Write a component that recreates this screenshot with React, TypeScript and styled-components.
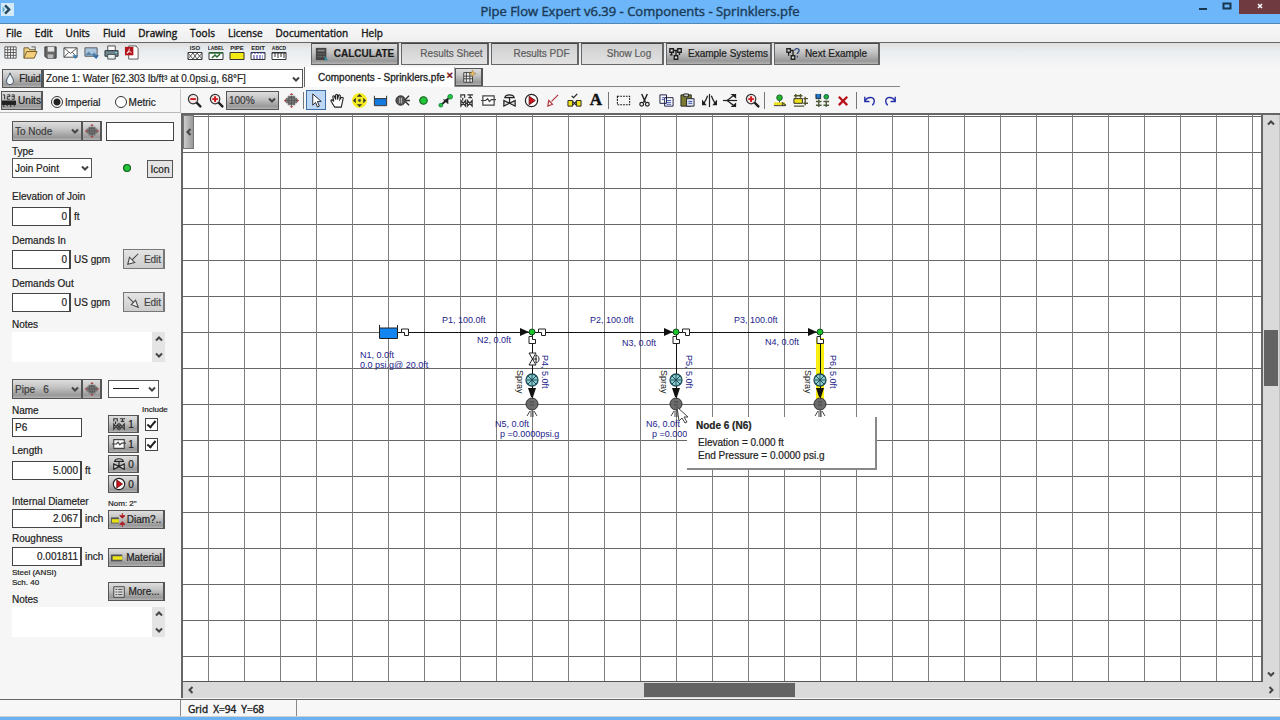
import React from 'react';
import styled, { createGlobalStyle, css } from 'styled-components';

const uiFont = '"Liberation Sans", Arial, sans-serif';
const frameFont = '"Open Sans", "Noto Sans", sans-serif';
const steel = 'linear-gradient(#dedede, #c4c4c4 40%, #989898 85%, #b4b4b4)';

const GlobalStyle = createGlobalStyle`
  *, *::before, *::after { box-sizing: border-box; }
  body { margin: 0; background: #f6f6f6; color: #222; font: 10px/13px ${uiFont}; -webkit-text-stroke: 0.2px; }
  button, input, select, textarea { font: inherit; color: inherit; margin: 0; padding: 0; border-radius: 0; }
  svg { display: block; flex: none; }
`;

const Window = styled.div`
  display: flex;
  flex-direction: column;
  height: 100vh;
  overflow: hidden;
  border-bottom: 3px solid #6cb2f2;
`;

/* ---------- window frame ---------- */

const TitleBar = styled.header`
  position: relative;
  display: flex;
  justify-content: center;
  height: 24px;
  flex: none;
  background: #6cb6f9;
  border-bottom: 1px solid #5288b6;
`;

const Title = styled.h1`
  margin: 0;
  font: 13px/22px ${frameFont};
  color: #1b3a57;
  -webkit-text-stroke: 0.4px #1b3a57;
`;

const AppIcon = styled.div`
  position: absolute;
  left: 1px;
  top: 3px;
`;

const WindowButtons = styled.div`
  position: absolute;
  right: 0;
  top: 0;
  display: flex;
`;

const WindowButton = styled.button<{ $close?: boolean }>`
  display: flex;
  align-items: center;
  justify-content: center;
  width: ${(p) => (p.$close ? 41 : 24)}px;
  height: 14px;
  padding-bottom: 3px;
  border: 0;
  background: ${(p) => (p.$close ? '#6f3b40' : 'transparent')};
  color: ${(p) => (p.$close ? '#fff' : '#16374f')};
`;

const MenuBar = styled.nav`
  display: flex;
  align-items: center;
  gap: 13px;
  height: 19px;
  flex: none;
  padding-left: 6px;
  background: linear-gradient(#f8f8f8, #efefef);
  border-bottom: 1px solid #666;
`;

const MenuLink = styled.a`
  font: 10px/16px ${frameFont};
  color: #1a1a1a;
  text-decoration: none;
  -webkit-text-stroke: 0.4px #1a1a1a;
`;

/* ---------- top toolbar ---------- */

const TopToolbar = styled.div`
  display: flex;
  align-items: flex-start;
  height: 24px;
  flex: none;
  padding-left: 2px;
  background: linear-gradient(#e0dfe0, #e9edf0 35%, #f6f6f6);
`;

const IconStrip = styled.div<{ $width: number; $left?: number }>`
  display: flex;
  justify-content: space-between;
  align-items: center;
  flex: none;
  width: ${(p) => p.$width}px;
  margin-left: ${(p) => p.$left || 0}px;
`;

const FlatButton = styled.button<{ $size?: number; $active?: boolean }>`
  display: flex;
  align-items: center;
  justify-content: center;
  flex: none;
  width: ${(p) => p.$size || 16}px;
  height: ${(p) => p.$size || 18}px;
  border: ${(p) => (p.$active ? '1px solid #3c6ea8' : '0')};
  background: ${(p) => (p.$active ? '#bcd8f6' : 'transparent')};
`;

const LetterButton = styled(FlatButton)`
  font: bold 17px/20px "Liberation Serif", serif;
  color: #111;
  -webkit-text-stroke: 0.5px #111;
`;

const ActionGroup = styled.div`
  display: flex;
  gap: 2px;
  margin-left: 24px;
`;

const ActionButton = styled.button<{ $width: number; $tone: 'light' | 'steel'; $strong?: boolean }>`
  display: flex;
  align-items: center;
  justify-content: center;
  gap: 5px;
  width: ${(p) => p.$width}px;
  height: 22px;
  padding-left: ${(p) => (p.$tone === 'light' ? 14 : 0)}px;
  border: 1px solid #666;
  border-top-color: #444;
  border-right: 2px solid #666;
  font: ${(p) => (p.$strong ? 'bold ' : '')}10px/16px ${uiFont};
  white-space: nowrap;
  color: ${(p) => (p.$tone === 'light' ? '#5c5c5c' : '#1c1c1c')};
  background: ${(p) => (p.$tone === 'light' ? 'linear-gradient(#cfcfcf, #e2e2e2)' : steel)};
`;

/* ---------- fluid row, tabs ---------- */

const DocumentRow = styled.div`
  display: flex;
  height: 22px;
  flex: none;
`;

const FluidGroup = styled.div`
  display: flex;
  width: 304px;
  flex: none;
  padding: 2px 1px 1px 2px;
`;

const SteelButton = styled.button<{ $width: number; $height?: number }>`
  display: flex;
  align-items: center;
  justify-content: center;
  gap: 2px;
  flex: none;
  width: ${(p) => p.$width}px;
  height: ${(p) => p.$height || 19}px;
  border: 1px solid #555;
  border-right-width: 2px;
  background: ${steel};
  white-space: nowrap;
`;

const SelectBox = styled.span<{ $width?: number; $height: number; $steel?: boolean }>`
  position: relative;
  display: flex;
  flex: ${(p) => (p.$width ? 'none' : '1')};
  width: ${(p) => (p.$width ? `${p.$width}px` : 'auto')};
  height: ${(p) => p.$height}px;

  select {
    appearance: none;
    width: 100%;
    padding-left: 2px;
    border: 1px solid #555;
    background: ${(p) => (p.$steel ? steel : '#fff')};
    ${(p) => p.$steel && css`color: #3a3a3a;`}
  }

  svg {
    position: absolute;
    top: 50%;
    right: 3px;
    transform: translateY(-50%);
    pointer-events: none;
  }

  svg + svg {
    right: auto;
    left: 5px;
  }
`;

const TabStrip = styled.div`
  display: flex;
  align-items: flex-end;
  flex: none;
  height: 20px;
  width: 596px;
  border-bottom: 1px solid #888;
`;

const Tab = styled.div`
  display: flex;
  align-items: center;
  gap: 1px;
  width: 151px;
  height: 20px;
  margin-bottom: -1px;
  padding-left: 13px;
  background: #fff;
  border-left: 1px solid #666;
  border-right: 1px solid #aaa;
  -webkit-text-stroke: 0.3px #222;
  white-space: nowrap;
`;

const TabClose = styled.button`
  width: 8px;
  height: 16px;
  border: 0;
  background: transparent;
  color: #7c1420;
  -webkit-text-stroke: 0.3px #7c1420;
  font: bold 11px/10px ${uiFont};
  padding-bottom: 5px;
`;

/* ---------- units row, drawing tools ---------- */

const ToolsRow = styled.div`
  display: flex;
  height: 24px;
  flex: none;
`;

const UnitsGroup = styled.fieldset`
  display: flex;
  align-items: center;
  width: 181px;
  flex: none;
  margin: 0;
  padding: 0 0 0 1px;
  border: 0;
  border-bottom: 1px solid #b8b8b8;
  border-right: 1px solid #c4c4c4;
`;

const RadioLabel = styled.label<{ $left: number }>`
  display: flex;
  align-items: center;
  gap: 2px;
  margin-left: ${(p) => p.$left}px;
  padding-top: 3px;

  input {
    appearance: none;
    width: 12px;
    height: 12px;
    border: 1px solid #333;
    border-radius: 50%;
    background: #fff;
  }
  input:checked {
    background: radial-gradient(circle, #222 3px, #fff 4px);
  }
`;

const DrawTools = styled.div`
  display: flex;
  align-items: center;
  padding: 0 0 2px 3px;
`;

const Separator = styled.span<{ $left?: number }>`
  width: 1px;
  height: 17px;
  margin: 0 4px 0 ${(p) => p.$left || 2}px;
  background: #777;
`;

/* ---------- main area ---------- */

const Main = styled.main`
  display: flex;
  flex: 1;
  min-height: 0;
`;

const Sidebar = styled.aside`
  width: 181px;
  flex: none;
  padding: 8px 7px 0 12px;
  background: #f6f6f6;
`;

const Row = styled.div<{ $gap?: number; $top?: number }>`
  display: flex;
  align-items: center;
  gap: ${(p) => p.$gap || 0}px;
  margin-top: ${(p) => p.$top || 0}px;
`;

const Label = styled.label<{ $top: number }>`
  display: block;
  margin-top: ${(p) => p.$top}px;
  line-height: 13px;
  white-space: nowrap;
`;

const TextInput = styled.input<{ $width: number; $right?: boolean }>`
  width: ${(p) => p.$width}px;
  height: 19px;
  padding: 0 2px;
  border: 1px solid #444;
  border-right-width: ${(p) => (p.$right ? 2 : 1)}px;
  background: #fff;
  text-align: ${(p) => (p.$right ? 'right' : 'left')};
`;

const NodeIcon = styled.div`
  margin: 0 13px 0 28px;
`;

const EditButton = styled.button`
  display: flex;
  align-items: center;
  justify-content: center;
  gap: 4px;
  width: 42px;
  height: 20px;
  margin-left: auto;
  margin-right: 9px;
  border: 1px solid #777;
  border-right-width: 2px;
  background: linear-gradient(#e4e4e4, #cdcdcd);
  color: #444;
`;

const IconButton = styled.button`
  width: 26px;
  height: 18px;
  margin-top: 2px;
  border: 1px solid #555;
  background: #e4e4e4;
`;

const NotesBox = styled.div`
  display: flex;
  width: 153px;
  height: 30px;
  margin-top: 1px;

  textarea {
    flex: 1;
    min-width: 0;
    border: 0;
    background: #fff;
    resize: none;
    overflow: hidden;
  }
`;

const Stepper = styled.div`
  display: flex;
  flex-direction: column;
  justify-content: space-between;
  width: 13px;
  padding: 3px 0;
  background: #e4e4e4;

  button {
    display: flex;
    justify-content: center;
    border: 0;
    background: transparent;
  }
`;

const PipeColumns = styled.div`
  display: flex;
  margin-top: 5px;
`;

const PipeFields = styled.div`
  width: 96px;
`;

const PipeActions = styled.div`
  display: flex;
  flex-direction: column;
`;

const SmallText = styled.div<{ $top?: number }>`
  margin-top: ${(p) => p.$top || 0}px;
  font: 8px/10px ${uiFont};
`;

const IncludeText = styled.div`
  margin: 1px 0 0 34px;
  font: 8px/10px ${uiFont};
`;

const ComponentRow = styled.div`
  display: flex;
  align-items: center;
  gap: 6px;
  height: 18px;
  margin-bottom: 2px;
`;

const CheckBox = styled.input`
  position: relative;
  appearance: none;
  width: 13px;
  height: 13px;
  border: 1px solid #444;
  background: #fff;

  &:checked::after {
    content: '';
    position: absolute;
    left: 3px;
    top: 0;
    width: 5px;
    height: 9px;
    border: solid #222;
    border-width: 0 2px 2px 0;
    transform: rotate(40deg);
  }
`;

/* ---------- canvas ---------- */

const Workspace = styled.section`
  display: flex;
  flex-direction: column;
  flex: 1;
  min-width: 0;
  border-left: 2px solid #666;
  border-top: 2px solid #666;
`;

const CanvasRow = styled.div`
  display: flex;
  flex: 1;
  min-height: 0;
`;

const Canvas = styled.div`
  position: relative;
  flex: 1;
  min-width: 0;
  overflow: hidden;
  border-right: 2px solid #666;
  border-bottom: 1px solid #555;
  background-color: #fff;
  background-image: linear-gradient(90deg, #7c7c7c 1px, transparent 1px), linear-gradient(#666 1px, transparent 1px);
  background-size: 36px 36px;
  background-position: 25px 1px;
`;

const CollapseHandle = styled.button`
  position: absolute;
  left: 0;
  top: 0;
  display: flex;
  align-items: center;
  justify-content: center;
  width: 11px;
  height: 34px;
  border: 1px solid #777;
  background: linear-gradient(90deg, #ccc, #999);
`;

const Diagram = styled.svg`
  position: absolute;
  left: 0;
  top: 0;

  text {
    font: 9px ${uiFont};
    fill: #23238c;
    -webkit-text-stroke: 0.2px #23238c;
  }
`;

const SprayText = styled.text`
  && {
    fill: #222;
    -webkit-text-stroke: 0.2px #222;
  }
`;

const NodeTip = styled.div`
  position: absolute;
  left: 504px;
  top: 302px;
  width: 190px;
  height: 53px;
  padding: 2px 0 0 11px;
  background: #fff;
  border-right: 2px solid #888;
  border-bottom: 2px solid #888;

  strong { display: block; margin: 0 0 4px -2px; }
`;

const Pointer = styled.div`
  position: absolute;
  left: 493px;
  top: 291px;
`;

const ScrollBar = styled.div<{ $vertical?: boolean }>`
  display: flex;
  flex-direction: ${(p) => (p.$vertical ? 'column' : 'row')};
  flex: none;
  ${(p) => (p.$vertical ? 'width: 17px;' : 'height: 16px;')}
  background: #dadada;
  border-right: 1px solid #c0c0c0;
`;

const ScrollArrow = styled.button`
  display: flex;
  align-items: center;
  justify-content: center;
  width: 16px;
  height: 16px;
  border: 0;
  background: transparent;
`;

const ScrollTrack = styled.div<{ $vertical?: boolean }>`
  display: flex;
  flex-direction: ${(p) => (p.$vertical ? 'column' : 'row')};
  flex: 1;
  padding: ${(p) => (p.$vertical ? '0 1px' : '1px 0')};
`;

const ScrollGap = styled.div<{ $grow: number }>`
  flex: ${(p) => p.$grow} 0 0;
`;

const ScrollThumb = styled.div<{ $grow: number }>`
  flex: ${(p) => p.$grow} 0 0;
  background: #636363;
`;

const StatusBar = styled.footer`
  display: flex;
  height: 18px;
  flex: none;
  margin-top: 1px;
  border-top: 1px solid #666;
  border-bottom: 1px solid #d0d0d0;
  background: #f7f7f7;
`;

const StatusCell = styled.div<{ $width: number }>`
  width: ${(p) => p.$width}px;
  padding-left: 7px;
  border-right: 1px solid #888;
  font: 10px/18px ${frameFont};
  -webkit-text-stroke: 0.4px #222;
`;

/* ---------- icons ---------- */

const art: Record<string, React.ReactNode> = {
  grid: <path d="M2 2h12v12H2zM5 2v12M8 2v12M11 2v12M2 5h12M2 8h12M2 11h12" stroke="#555" fill="#fff" />,
  open: <><path d="M1 14V3h5l1 2h6v3" fill="#f0d080" stroke="#6b5a30" /><path d="M1 14l3-7h11l-3 7z" fill="#f5cf7a" stroke="#6b5a30" /><path d="M9 2h4v3" stroke="#555" fill="none" /></>,
  save: <><path d="M2 2h12v12H4l-2-2z" fill="#666" stroke="#333" /><path d="M5 2h7v5H5z" fill="#e6e6e6" /><path d="M5 10h6v4H5z" fill="#bbb" /></>,
  mail: <><path d="M1 3h14v10H1z" fill="#fff" stroke="#444" /><path d="M1 3l7 6 7-6M1 13l5-5M15 13l-5-5" stroke="#444" fill="none" /><path d="M10 11h6l-3 4z" fill="#3a7fb0" /></>,
  mailout: <><path d="M1 3h13v9H1z" fill="#a8c6e0" stroke="#555" /><path d="M1 11l4-4 3 3 3-2 3 3" fill="#5d86a8" /><path d="M9 11h7l-3 4z" fill="#2d6ca5" /></>,
  print: <><path d="M4 1h8v5H4z" fill="#fff" stroke="#444" /><path d="M1 6h14v6H1z" fill="#6d8790" stroke="#333" /><path d="M4 10h8v5H4z" fill="#e8f2f5" stroke="#444" /><path d="M12 8h2" stroke="#7fe0ff" /></>,
  pdf: <><path d="M5 1h8l2 3v11H5z" fill="#fff" stroke="#555" /><path d="M1 2h9v9H1z" fill="#b3141b" /><path d="M3 9c2-1 3-4 2.500-5M3 8c2-1 4-1 5 0" stroke="#fff" fill="none" /></>,
  calc: <><path d="M1 1h12v14H1z" fill="#444" /><path d="M3 3h8v2H3z" fill="#888" /><path d="M3 8h8M3 11h8" stroke="#777" strokeDasharray="2 1" /><path d="M11 10v5h4z" fill="#2c8fa3" /></>,
  network: <path d="M1 2h4v4H1zM10 2h4v4h-4zM6 10h4v4H6zM5 4h5M8 4v6M3 6v3M12 6v3M1 9h3" fill="#ddd" stroke="#1c1c1c" strokeWidth="1.500" />,
  networkq: <><path d="M1 2h4v4H1zM6 10h4v4H6zM5 4h4M8 4v6M3 6v4" fill="#ddd" stroke="#222" strokeWidth="1.500" /><path d="M10 4c0-3 5-3 5 0 0 2-2 2-2 4M13 10v2" stroke="#2e4b7c" strokeWidth="1.500" fill="none" /></>,
  drop: <path d="M8 1c1 4 4 6 4 9.500a4 4 0 0 1-8 0C4 7 7 5 8 1z" fill="#eef6fb" stroke="#345" />,
  ruler: <><path d="M1 1h2v5M6 1h3v2H6v3h3M11 1h3v5h-3M11 3h3" stroke="#222" fill="none" /><path d="M0 8h16v4H0zM2 12v3M6 12v2M10 12v3M14 12v2" fill="#222" stroke="#222" /></>,
  newtab: <><path d="M2 3h10v11H2zM2 7h10M2 10h10M5 3v11M9 3v11" fill="#eee" stroke="#333" /><path d="M12 0l1 3 3 1-3 1-1 3-1-3-3-1 3-1z" fill="#f0c060" stroke="#8a6420" strokeWidth=".5" /></>,
  zoomout: <><circle cx="6.500" cy="6.500" r="5" fill="#f6e8e8" stroke="#333" strokeWidth="1.300" /><path d="M10 10l5 5" stroke="#222" strokeWidth="2.500" /><path d="M3.500 6.500h6" stroke="#d01818" strokeWidth="2" /></>,
  zoomin: <><circle cx="6.500" cy="6.500" r="5" fill="#f6e8e8" stroke="#333" strokeWidth="1.300" /><path d="M10 10l5 5" stroke="#222" strokeWidth="2.500" /><path d="M3.500 6.500h6M6.500 3.500v6" stroke="#d01818" strokeWidth="2" /></>,
  target: <><path d="M4 3h8v10H4zM2 5h12v6H2z" fill="#777" /><path d="M5 5h6v6H5zM8 1v14M1 8h14" stroke="#444" strokeDasharray="1 1" fill="none" /><path d="M8 0l2 2H6zM8 16l2-2H6zM0 8l2-2v4zM16 8l-2-2v4z" fill="#a83838" /></>,
  cursor: <path d="M4 1v12l3-3 2 5 2-1-2-5h4z" fill="#fff" stroke="#222" />,
  hand: <path d="M5 15C3 12 1 9 1 8s1.500-1 3 1L3 4c0-1.500 1.500-1.500 2 0l1 3V2.500c0-1.500 2-1.500 2 0V7l1-4c.5-1.500 2-1 2 0l-.5 4 1.500-2c1-1 2.500 0 2 1L12 15z" fill="#fff" stroke="#222" strokeWidth="1.200" />,
  pan: <><circle cx="8" cy="8" r="8" fill="#f4ec20" /><path d="M8 1l3 3H5zM8 15l3-3H5zM1 8l3-3v6zM15 8l-3-3v6z" fill="#333" /><circle cx="8" cy="8" r="1.500" fill="#444" /></>,
  tank: <><path d="M2 6h12v7H2z" fill="#1479e0" /><path d="M1.500 3v10.500h13V3M2 6h12" stroke="#222" fill="none" /></>,
  spray: <><circle cx="6" cy="8" r="5" fill="#555" stroke="#222" /><path d="M5 5v6M7 5v6" stroke="#bbb" /><path d="M11 7l4-4M11 8h5M11 9l4 4" stroke="#333" strokeWidth="1.500" /></>,
  join: <circle cx="8" cy="8" r="4" fill="#22c43a" stroke="#145c1c" strokeWidth="1.200" />,
  pipe: <><path d="M3 13L13 4" stroke="#222" strokeWidth="2" /><circle cx="3" cy="13" r="2" fill="#2bc43d" stroke="#184" /><circle cx="13" cy="4" r="2.500" fill="#2bc43d" stroke="#184" /><path d="M5 7l6 5v-5z" fill="#222" /></>,
  fittings: <path d="M2 5V2h4v3M9 2h6M12 2v3M10 5h4M4 5v3M2 8l5 6V8l-5 6zM9 8l5 6V8l-5 6zM7 11h2" fill="none" stroke="#333" strokeWidth="1.300" />,
  component: <path d="M2 3h12v10H2zM0 8h5l2-2 2 3 2-2h5" fill="#fff" stroke="#444" strokeWidth="1.300" />,
  valve: <path d="M2 8v6l6-3 6 3V8l-6 3zM8 11V5M3 5c1-4 9-4 10 0z" fill="#ddd" stroke="#222" strokeWidth="1.300" />,
  pump: <><circle cx="8" cy="8" r="6.500" fill="#fff" stroke="#222" strokeWidth="1.300" /><path d="M5.500 3.500v9L12 8z" fill="#d0121c" stroke="#611" /></>,
  demand: <path d="M14 2L7 9M4 8l4 4-5 2z" fill="#fff" stroke="#b03a40" strokeWidth="1.300" />,
  control: <><path d="M1 8h5v6H1zM10 8h5v6h-5z" fill="#ede21c" stroke="#222" /><path d="M6 9l4 4M10 9l-4 4M5 3l2 2 4-4" stroke="#222" fill="none" strokeWidth="1.300" /></>,
  marquee: <path d="M1.500 3.500h13v9h-13z" fill="none" stroke="#222" strokeWidth="1.200" strokeDasharray="2 1" />,
  cut: <><path d="M5 1l4 9M11 1L7 10" stroke="#222" strokeWidth="1.500" /><circle cx="5" cy="12" r="2" fill="none" stroke="#222" strokeWidth="1.300" /><circle cx="11" cy="12" r="2" fill="none" stroke="#222" strokeWidth="1.300" /></>,
  copy: <><path d="M1 2h7v9H1zM6 5h9v9H6z" fill="#fff" stroke="#14143c" /><path d="M3 5h3M3 7h3M8 8h5M8 10h5M8 12h5" stroke="#3a50a8" /></>,
  paste: <><path d="M1 2h11v12H1z" fill="#7c7a30" stroke="#222" /><path d="M4 1h5v3H4z" fill="#ccc" stroke="#222" /><path d="M7 6h8v8H7z" fill="#dfe6f6" stroke="#223" /><path d="M9 9h4M9 11h4" stroke="#3450a0" /></>,
  fliph: <><path d="M8 1v14" stroke="#222" strokeWidth="1.300" /><path d="M6 3C5 6 4 8 2 11M10 3c1 3 2 5 4 8" stroke="#222" fill="none" strokeWidth="1.300" /><path d="M0 7v6h5zM16 7v6h-5z" fill="#222" /></>,
  flipv: <><path d="M0 8h15" stroke="#222" strokeWidth="1.300" /><path d="M4 8c2-1 4-3 7-5M4 8c2 1 4 3 7 5" stroke="#222" fill="none" strokeWidth="1.300" /><path d="M8 1h6v5zM8 15h6v-5z" fill="#222" /></>,
  label: <><circle cx="8" cy="5" r="3" fill="#20b52e" stroke="#1a5a20" /><path d="M2 10h12v3H2z" fill="#f0e21a" /><path d="M8 8v2M2 13.500h12M11 10l4 3h-4z" stroke="#333" /></>,
  pipes: <><path d="M1 6h9v5H1z" fill="#ede21c" stroke="#222" /><path d="M3 1v4M8 1v4M1 3h9M1 14h11M13 4v9M11 6h5M11 11h5" stroke="#55552c" strokeWidth="1.500" /></>,
  nodes: <><path d="M1 1v5h5V1" fill="#1d74c8" stroke="#222" /><circle cx="12" cy="4" r="2.500" fill="#22b535" stroke="#154" /><path d="M4 7v8M1 9h6M1 13h6M12 8v7M9 9h6M9 13h6" stroke="#4c5c3c" strokeWidth="1.500" /></>,
  remove: <path d="M3 4l9 9M12 4l-9 9" stroke="#b8141c" strokeWidth="2.500" />,
  undo: <path d="M3 4v5h5M3 9c3-6 11-5 10 0 0 2-1 3-2 4" stroke="#2430a8" strokeWidth="1.500" fill="none" />,
  redo: <path d="M13 4v5H8M13 9C10 3 2 4 3 9c0 2 1 3 2 4" stroke="#2430a8" strokeWidth="1.500" fill="none" />,
  arrowin: <path d="M14 2L7 9M4 6l6 6-8 2z" fill="#eee" stroke="#444" strokeWidth="1.200" />,
  arrowout: <path d="M2 2l7 7M6 11l5-5 3 8z" fill="#eee" stroke="#444" strokeWidth="1.200" />,
  diameter: <><path d="M0 5h9v7H0z" fill="#555" /><path d="M1 7h8v4H1z" fill="#e8e015" /><path d="M13 0v5M10 3l3 3 3-3zM13 16v-5M10 13l3-3 3 3z" fill="#b01c24" stroke="#b01c24" /></>,
  material: <><path d="M1 4h13v8H1z" fill="#555" /><path d="M3 6h11v4H3z" fill="#ede51a" /></>,
  more: <><path d="M2 2h12v12H2z" fill="#ddd" stroke="#333" /><path d="M4 5h2M4 8h2M4 11h2M7 5h5M7 8h5M7 11h5" stroke="#333" /></>,
  logo: <><path d="M0 0h16v16H0z" fill="#d5eaf7" /><path d="M5 3l5 5-5 5" stroke="#25485f" strokeWidth="3" fill="none" /><path d="M2 4l3 4-3 4" fill="#56a8cf" /></>,
};

const Icon = ({ name, size = 16 }: { name: string; size?: number }) => (
  <svg width={size} height={size} viewBox="0 0 16 16" fill="none" aria-hidden="true">
    {art[name]}
  </svg>
);

const ViewIcon = ({ kind }: { kind: string }) => (
  <svg width="16" height="17" viewBox="0 0 16 17" fill="none" aria-hidden="true">
    <text x="8" y="6" textAnchor="middle" fontSize={kind.length > 3 && kind !== 'PIPE' && kind !== 'EDIT' ? 5 : 6} fontWeight="bold" fill="#222">
      {kind}
    </text>
    <path d="M1 8.500h14v7H1z" fill={kind === 'PIPE' ? '#f2ea12' : '#fff'} stroke="#333" />
    {kind === 'ISO' && <path d="M1 15l5-6 4 6 5-6M1 9l5 6 4-6 5 6" stroke="#555" />}
    {kind === 'LABEL' && <path d="M1 9h14M4 14l3-3 2 2 3-3" stroke="#2c6e35" strokeWidth="1.500" />}
    {kind === 'EDIT' && <path d="M1 9h14M3 12h10M3 14h10" stroke="#34349c" strokeDasharray="2 1" />}
    {kind === 'ABCD' && <path d="M1 9h14M4 9v4M7 9v5M10 9v4M13 9v5" stroke="#333" />}
  </svg>
);

const Chevron = ({ dir = 'down' }: { dir?: 'down' | 'up' | 'left' | 'right' }) => {
  const turn = { down: 0, left: 90, up: 180, right: 270 }[dir];
  return (
    <svg width="8" height="8" viewBox="0 0 8 8" fill="none" aria-hidden="true">
      <path d="M1 2.500l3 3 3-3" stroke="#444" strokeWidth="2" transform={`rotate(${turn} 4 4)`} />
    </svg>
  );
};

/* ---------- parts ---------- */

type DropProps = { label: string; value: string; width?: number; height?: number; steel?: boolean; id?: string; line?: boolean };

const Drop = ({ label, value, width, height = 20, steel: isSteel, id, line }: DropProps) => (
  <SelectBox $width={width} $height={height} $steel={isSteel}>
    <select aria-label={label} id={id}>
      <option>{value}</option>
    </select>
    <Chevron />
    {line && (
      <svg width="26" height="4" viewBox="0 0 26 4" aria-hidden="true">
        <path d="M0 1.500h26" stroke="#222" />
      </svg>
    )}
  </SelectBox>
);

const Tools = ({ names, width, left, active }: { names: string[]; width: number; left?: number; active?: string }) => (
  <IconStrip $width={width} $left={left}>
    {names.map((n) =>
      n === 'text' ? (
        <LetterButton key={n} $size={20} aria-label="Text">A</LetterButton>
      ) : (
        <FlatButton key={n} $size={20} $active={n === active} aria-label={n}>
          <Icon name={n} size={15} />
        </FlatButton>
      ),
    )}
  </IconStrip>
);

const Notes = ({ id }: { id: string }) => (
  <NotesBox>
    <textarea id={id} />
    <Stepper>
      <button aria-label="Scroll up"><Chevron dir="up" /></button>
      <button aria-label="Scroll down"><Chevron /></button>
    </Stepper>
  </NotesBox>
);

type QuantityProps = { id: string; label: string; value: string; unit?: string; width: number; top: number; gap: number; children?: React.ReactNode };

const Quantity = ({ id, label, value, unit, width, top, gap, children }: QuantityProps) => (
  <>
    <Label $top={top} htmlFor={id}>{label}</Label>
    <Row $gap={3} $top={gap}>
      <TextInput id={id} $width={width} $right={!!unit} defaultValue={value} />
      {unit}
      {children}
    </Row>
  </>
);

const Elbow = ({ x, y, down }: { x: number; y: number; down?: boolean }) => (
  <path
    transform={`translate(${x} ${y})${down ? ' rotate(90) scale(1 -1)' : ''}`}
    d="M-3.500-3h7v6.500h-4v-3h-3z"
    fill="#fff"
    stroke="#222"
  />
);

const Sprinkler = ({ x, label, valve, selected }: { x: number; label: string; valve?: boolean; selected?: boolean }) => (
  <g>
    {selected && <path d={`M${x - 4} 223h8v62h-8z`} fill="#f8ee10" />}
    <path d={`M${x + 0.5} 217v74`} stroke="#111" />
    <Elbow x={x} y={225} down />
    {valve && (
      <>
        <path d={`M${x - 3} 238h7l-7 12h7z`} fill="#fff" stroke="#222" />
        <path d={`M${x} 244h5M${x + 4} 240c4 1 4 7 0 8z`} fill="#fff" stroke="#222" />
      </>
    )}
    <circle cx={x} cy="265" r="6" fill="#8fcfd6" stroke="#1e4c54" strokeWidth="1.300" />
    <path d={`M${x - 5} 265h10M${x} 260v10M${x - 4} 261l8 8M${x + 4} 261l-8 8`} stroke="#1e4c54" />
    <path d={`M${x - 4} 273h8l-3 9h-2z`} fill="#111" />
    <circle cx={x} cy="289" r="6" fill="#6c6c6c" stroke="#333" />
    <path d={`M${x - 2} 287h4M${x - 2} 290h4`} stroke="#444" />
    <path d={`M${x - 2} 296l-3 5M${x - 1} 296v6M${x + 1} 296v6M${x + 2} 296l3 5`} stroke="#444" />
    <text transform={`translate(${x + 10} 240) rotate(90)`}>{label}</text>
    <SprayText transform={`translate(${x - 15} 255) rotate(90)`}>Spray</SprayText>
  </g>
);

const JoinNode = ({ x }: { x: number }) => (
  <g>
    <path d={`M${x - 12} 213v8l9-4z`} fill="#111" />
    <circle cx={x} cy="217" r="3" fill="#1fc22e" stroke="#14501c" />
  </g>
);

const App = () => (
  <Window>
    <GlobalStyle />
    <TitleBar>
      <AppIcon><Icon name="logo" size={13} /></AppIcon>
      <Title>Pipe Flow Expert v6.39 - Components - Sprinklers.pfe</Title>
      <WindowButtons>
        <WindowButton aria-label="Minimize">
          <svg width="10" height="10" viewBox="0 0 10 10"><path d="M1 7h8v2H1z" fill="currentColor" /></svg>
        </WindowButton>
        <WindowButton aria-label="Maximize">
          <svg width="10" height="10" viewBox="0 0 10 10"><path d="M1.500 2.500h7v5h-7z" fill="none" stroke="currentColor" strokeWidth="2" /></svg>
        </WindowButton>
        <WindowButton $close aria-label="Close">
          <svg width="8" height="8" viewBox="0 0 8 8"><path d="M2 2l4 4M6 2L2 6" stroke="currentColor" strokeWidth="1.500" /></svg>
        </WindowButton>
      </WindowButtons>
    </TitleBar>

    <MenuBar>
      {['File', 'Edit', 'Units', 'Fluid', 'Drawing', 'Tools', 'License', 'Documentation', 'Help'].map((m) => (
        <MenuLink key={m} href="#">{m}</MenuLink>
      ))}
    </MenuBar>

    <TopToolbar>
      <IconStrip $width={138}>
        {['grid', 'open', 'save', 'mail', 'mailout', 'print', 'pdf'].map((n) => (
          <FlatButton key={n} aria-label={n}><Icon name={n} size={15} /></FlatButton>
        ))}
      </IconStrip>
      <IconStrip $width={100} $left={47}>
        {['ISO', 'LABEL', 'PIPE', 'EDIT', 'ABCD'].map((n) => (
          <FlatButton key={n}><ViewIcon kind={n} /></FlatButton>
        ))}
      </IconStrip>
      <ActionGroup>
        <ActionButton $width={88} $tone="steel" $strong><Icon name="calc" size={14} />CALCULATE</ActionButton>
        <ActionButton $width={88} $tone="light">Results Sheet</ActionButton>
        <ActionButton $width={88} $tone="light">Results PDF</ActionButton>
        <ActionButton $width={83} $tone="light">Show Log</ActionButton>
        <ActionButton $width={106} $tone="steel"><Icon name="network" size={14} />Example Systems</ActionButton>
        <ActionButton $width={106} $tone="steel"><Icon name="networkq" size={14} />Next Example</ActionButton>
      </ActionGroup>
    </TopToolbar>

    <DocumentRow>
      <FluidGroup>
        <SteelButton $width={41}><Icon name="drop" size={14} />Fluid</SteelButton>
        <Drop label="Fluid zone" height={19} value="Zone 1: Water [62.303 lb/ft³ at 0.0psi.g, 68°F]" />
      </FluidGroup>
      <TabStrip>
        <Tab>Components - Sprinklers.pfe<TabClose aria-label="Close tab">×</TabClose></Tab>
        <SteelButton $width={28} $height={18} aria-label="New tab"><Icon name="newtab" size={14} /></SteelButton>
      </TabStrip>
    </DocumentRow>

    <ToolsRow>
      <UnitsGroup>
        <SteelButton $width={42}><Icon name="ruler" size={14} />Units</SteelButton>
        <RadioLabel $left={8}><input type="radio" name="units" defaultChecked />Imperial</RadioLabel>
        <RadioLabel $left={14}><input type="radio" name="units" />Metric</RadioLabel>
      </UnitsGroup>
      <DrawTools>
        <Tools names={['zoomout', 'zoomin']} width={42} />
        <Drop label="Zoom" value="100%" width={53} height={19} steel />
        <Tools names={['target']} width={20} left={2} />
        <Separator />
        <Tools
          active="cursor"
          width={300}
          left={-2}
          names={['cursor', 'hand', 'pan', 'tank', 'spray', 'join', 'pipe', 'fittings', 'component', 'valve', 'pump', 'demand', 'control', 'text']}
        />
        <Separator />
        <Tools names={['marquee', 'cut', 'copy', 'paste', 'fliph', 'flipv', 'zoomin']} width={149} />
        <Separator />
        <Tools names={['label', 'pipes', 'nodes', 'remove']} width={85} />
        <Separator />
        <Tools names={['undo', 'redo']} width={41} left={-2} />
      </DrawTools>
    </ToolsRow>

    <Main>
      <Sidebar>
        <Row>
          <Drop label="Node end" value="To Node" width={70} steel />
          <SteelButton $width={20} $height={20} aria-label="Find node"><Icon name="target" size={14} /></SteelButton>
          <Row $gap={4}><span /><TextInput $width={68} aria-label="Node name" /></Row>
        </Row>
        <Label $top={4} htmlFor="type">Type</Label>
        <Row>
          <Drop label="Type" id="type" value="Join Point" width={80} />
          <NodeIcon><Icon name="join" size={14} /></NodeIcon>
          <IconButton>Icon</IconButton>
        </Row>
        <Quantity id="elevation" label="Elevation of Join" value="0" unit="ft" width={59} top={12} gap={4} />
        <Quantity id="din" label="Demands In" value="0" unit="US gpm" width={59} top={8} gap={2}>
          <EditButton><Icon name="arrowin" size={14} />Edit</EditButton>
        </Quantity>
        <Quantity id="dout" label="Demands Out" value="0" unit="US gpm" width={59} top={8} gap={2}>
          <EditButton><Icon name="arrowout" size={14} />Edit</EditButton>
        </Quantity>
        <Label $top={6} htmlFor="node-notes">Notes</Label>
        <Notes id="node-notes" />

        <Row $top={17}>
          <Drop label="Pipe" value={'Pipe \u00a0\u00a06'} width={70} steel />
          <SteelButton $width={20} $height={20} aria-label="Find pipe"><Icon name="target" size={14} /></SteelButton>
          <Row $gap={6}><span /><Drop label="Line style" value="" width={51} height={18} line /></Row>
        </Row>
        <PipeColumns>
          <PipeFields>
            <Quantity id="name" label="Name" value="P6" width={70} top={0} gap={1} />
            <Quantity id="length" label="Length" value="5.000" unit="ft" width={70} top={7} gap={4} />
            <Quantity id="diameter" label="Internal Diameter" value="2.067" unit="inch" width={70} top={15} gap={1} />
            <Quantity id="roughness" label="Roughness" value="0.001811" unit="inch" width={70} top={4} gap={2} />
            <SmallText $top={2}>Steel (ANSI)<br />Sch. 40</SmallText>
            <Label $top={5} htmlFor="pipe-notes">Notes</Label>
          </PipeFields>
          <PipeActions>
            <IncludeText>Include</IncludeText>
            <ComponentRow>
              <SteelButton $width={31} $height={18}><Icon name="fittings" size={14} />1</SteelButton>
              <CheckBox type="checkbox" defaultChecked aria-label="Include fittings" />
            </ComponentRow>
            <ComponentRow>
              <SteelButton $width={31} $height={18}><Icon name="component" size={14} />1</SteelButton>
              <CheckBox type="checkbox" defaultChecked aria-label="Include component" />
            </ComponentRow>
            <ComponentRow><SteelButton $width={31} $height={18}><Icon name="valve" size={14} />0</SteelButton></ComponentRow>
            <ComponentRow><SteelButton $width={31} $height={18}><Icon name="pump" size={14} />0</SteelButton></ComponentRow>
            <SmallText $top={4}>Nom: 2"</SmallText>
            <Row $top={1}><SteelButton $width={57}><Icon name="diameter" size={14} />Diam?..</SteelButton></Row>
            <Row $top={19}><SteelButton $width={57}><Icon name="material" size={14} />Material</SteelButton></Row>
            <Row $top={15}><SteelButton $width={57}><Icon name="more" size={14} />More...</SteelButton></Row>
          </PipeActions>
        </PipeColumns>
        <Notes id="pipe-notes" />
      </Sidebar>

      <Workspace>
        <CanvasRow>
          <Canvas>
            <Diagram width="720" height="340" viewBox="0 0 720 340" fill="none">
              <path d="M215 217.500h422" stroke="#111" />
              <path d="M197 213h17v10h-17z" fill="#1385f0" />
              <path d="M196.500 210v13.500h18V210M197 213h17" stroke="#222" />
              <Elbow x={222} y={217} />
              <Elbow x={359} y={217} />
              <Elbow x={503} y={217} />
              <Sprinkler x={349} label="P4, 5.0ft" valve />
              <Sprinkler x={493} label="P5, 5.0ft" />
              <Sprinkler x={637} label="P6, 5.0ft" selected />
              <JoinNode x={349} />
              <JoinNode x={493} />
              <JoinNode x={637} />
              <text x="259" y="208">P1, 100.0ft</text>
              <text x="407" y="208">P2, 100.0ft</text>
              <text x="551" y="208">P3, 100.0ft</text>
              <text x="294" y="228">N2, 0.0ft</text>
              <text x="439" y="231">N3, 0.0ft</text>
              <text x="582" y="230">N4, 0.0ft</text>
              <text x="177" y="243">N1, 0.0ft</text>
              <text x="177" y="253">0.0 psi.g@ 20.0ft</text>
              <text x="312" y="312">N5, 0.0ft</text>
              <text x="317" y="322">p =0.0000psi.g</text>
              <text x="463" y="312">N6, 0.0ft</text>
              <text x="469" y="322">p =0.0000psi.g</text>
            </Diagram>
            <CollapseHandle aria-label="Collapse panel"><Chevron dir="left" /></CollapseHandle>
            <NodeTip>
              <strong>Node 6 (N6)</strong>
              Elevation = 0.000 ft<br />
              End Pressure = 0.0000 psi.g
            </NodeTip>
            <Pointer>
              <svg width="14" height="18" viewBox="0 0 14 18" aria-hidden="true">
                <path d="M1 1l11 10H8l3 5-2 1-3-5-3 3z" fill="#fff" stroke="#444" />
              </svg>
            </Pointer>
          </Canvas>
          <ScrollBar $vertical>
            <ScrollArrow aria-label="Scroll up"><Chevron dir="up" /></ScrollArrow>
            <ScrollTrack $vertical>
              <ScrollGap $grow={199} /><ScrollThumb $grow={56} /><ScrollGap $grow={281} />
            </ScrollTrack>
            <ScrollArrow aria-label="Scroll down"><Chevron /></ScrollArrow>
          </ScrollBar>
        </CanvasRow>
        <ScrollBar>
          <ScrollArrow aria-label="Scroll left"><Chevron dir="left" /></ScrollArrow>
          <ScrollTrack>
            <ScrollGap $grow={445} /><ScrollThumb $grow={150} /><ScrollGap $grow={468} />
          </ScrollTrack>
          <ScrollArrow aria-label="Scroll right"><Chevron dir="right" /></ScrollArrow>
        </ScrollBar>
      </Workspace>
    </Main>

    <StatusBar>
      <StatusCell $width={181} />
      <StatusCell $width={116}>Grid&nbsp; X=94&nbsp; Y=68</StatusCell>
    </StatusBar>
  </Window>
);

export default App;
